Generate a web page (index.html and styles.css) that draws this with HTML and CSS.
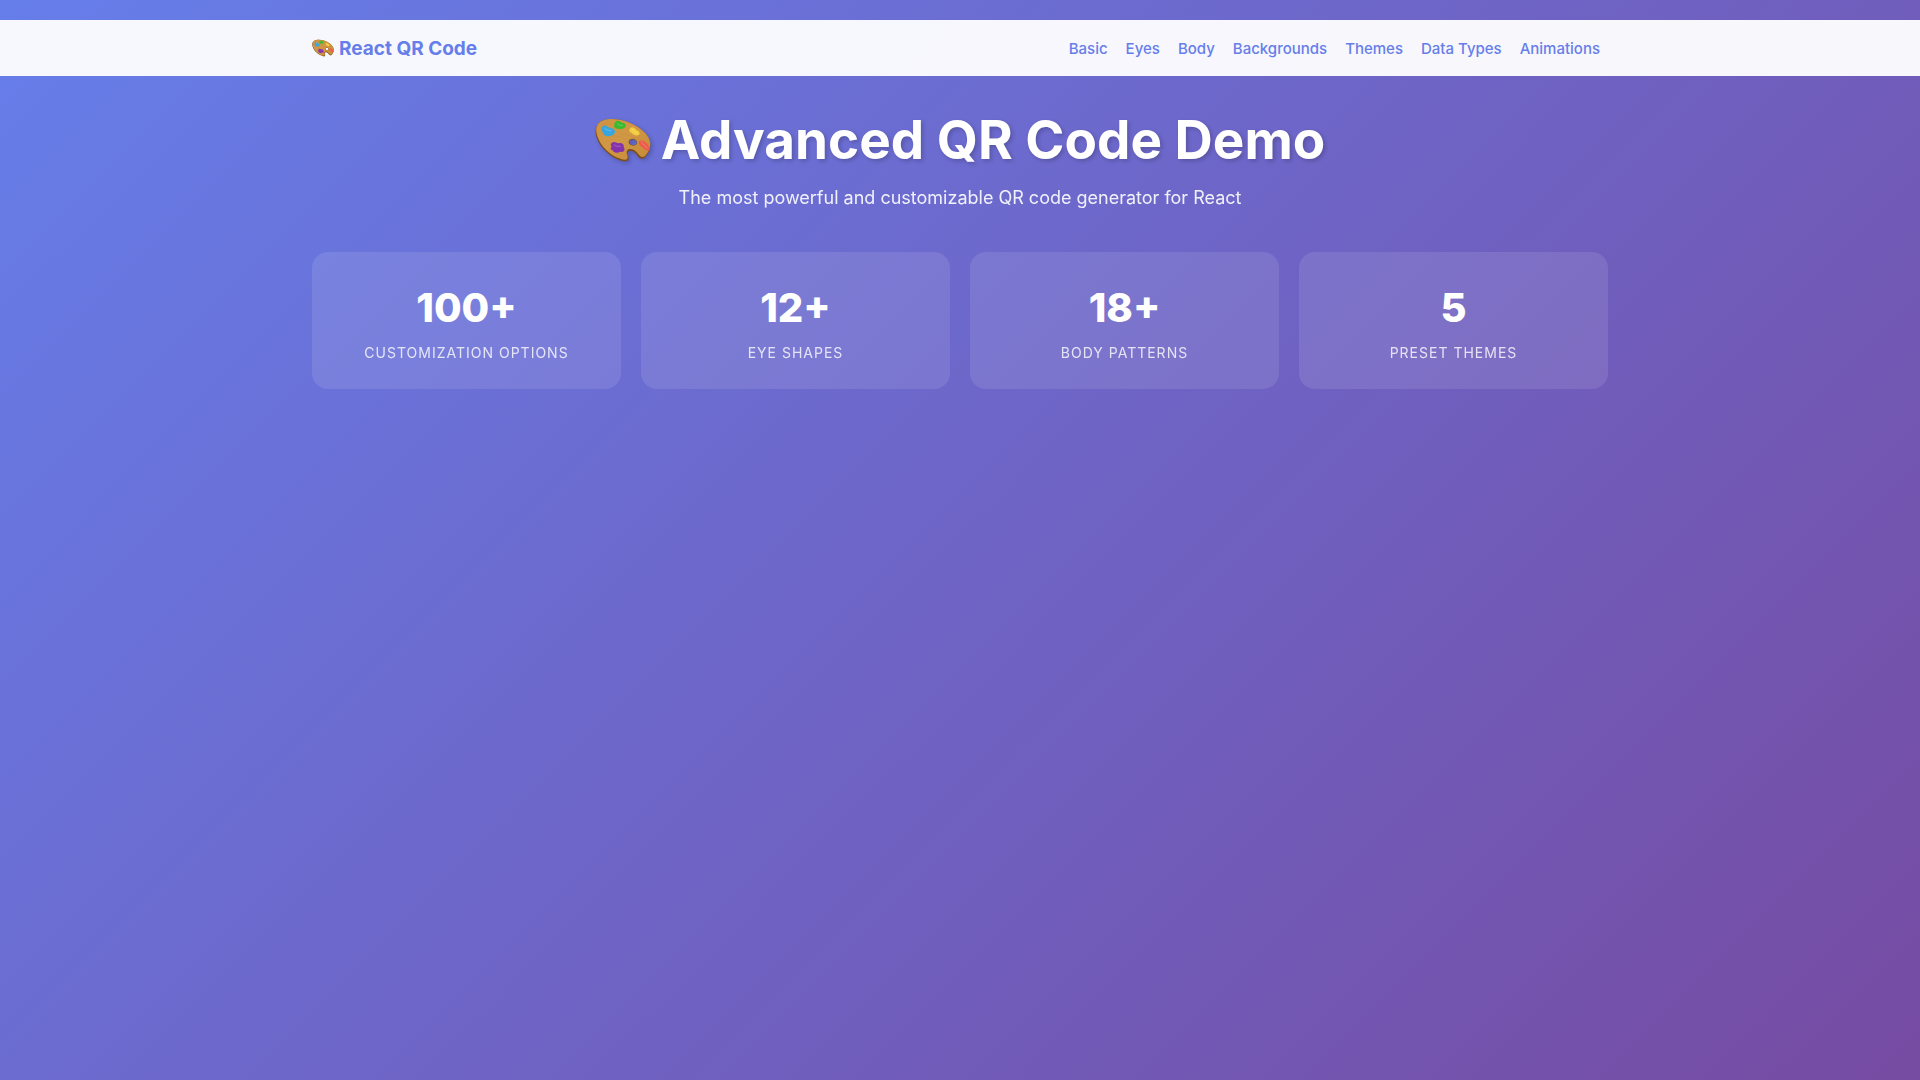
FILE: index.html
```html
<!DOCTYPE html>
<html lang="en">
<head>
<meta charset="utf-8">
<meta name="viewport" content="width=device-width, initial-scale=1">
<title>React QR Code</title>
<link rel="stylesheet" href="styles.css">
</head>
<body>
<svg class="sprite" aria-hidden="true">
  <defs>
    <linearGradient id="wood" x1="0" y1="0" x2="1" y2="1">
      <stop offset="0" stop-color="#cf9443"/>
      <stop offset=".5" stop-color="#d09745"/>
      <stop offset="1" stop-color="#c58a38"/>
    </linearGradient>
  </defs>
  <symbol id="palette" viewBox="46 56 168 132">
    <path fill="#7d4d17" fill-rule="evenodd" d="M48 100C46 76 62 61 88 59C122 57 158 69 184 90C203 105 213 122 212 139C211 154 204 165 196 174C190 181 181 179 176 172C169 163 163 154 153 154C144 154 142 160 145 168C149 178 146 187 136 186C102 182 52 144 48 100ZM149 129C150 136 158 140 165 137C173 134 173 126 167 122C161 118 148 120 149 129Z"/>
    <path fill="url(#wood)" fill-rule="evenodd" d="M50 97C47 75 63 61 88 59C122 57 158 69 184 90C203 105 213 122 212 136C211 149 205 159 197 169C191 175 183 174 178 167C171 157 163 149 153 149C143 149 139 155 142 164C146 174 144 182 136 181C101 178 56 140 50 97ZM147 129C148 137 158 141 166 138C175 135 174 126 168 121C161 116 146 118 147 129Z"/>
    <path fill="none" stroke="#a86e28" stroke-width="1" opacity=".3" d="M66 73C104 72 144 83 190 116M57 101C86 106 112 109 140 119M84 150C99 158 119 164 138 168M123 105C145 104 176 116 205 139"/>
    <path fill="#37a6df" d="M66 86C70 76 80 77 86 84C92 86 105 87 106 96C107 110 83 115 73 106C71 100 63 94 66 86Z"/>
    <path fill="#3abb30" d="M105 70C112 60 121 65 126 70C136 69 141 77 136 84C127 94 104 89 103 81Z"/>
    <path fill="#f3cb3d" d="M152 86C160 81 166 87 170 92C178 94 183 101 178 107C170 110 160 107 156 101C148 98 147 91 152 86Z"/>
    <path fill="#ed5b4b" d="M179 125C188 120 195 127 202 133C209 141 212 149 209 153C202 156 193 149 187 144C180 138 174 130 179 125Z"/>
    <path fill="#8533ad" d="M96 131C103 125 110 131 116 132C125 128 135 136 132 144C138 152 133 160 122 157C113 163 101 160 99 153C91 151 91 144 97 143C92 139 92 135 96 131Z"/>
    <path fill="none" stroke="#fff" stroke-width="2" stroke-linecap="round" opacity=".35" d="M75 87C83 93 88 94 94 94M114 73C119 79 122 79 128 78M158 90C162 97 166 98 171 101M185 128C192 137 197 140 203 146M103 137C111 143 118 140 122 141"/>
  </symbol>
</svg>
<nav class="navbar">
  <div class="container navbar-inner">
    <a class="brand" href="#top"><svg class="brand-icon" aria-hidden="true"><use href="#palette"/></svg>React QR Code</a>
    <div class="nav-links">
      <a href="#basic">Basic</a>
      <a href="#eyes">Eyes</a>
      <a href="#body">Body</a>
      <a href="#backgrounds">Backgrounds</a>
      <a href="#themes">Themes</a>
      <a href="#data-types">Data Types</a>
      <a href="#animations">Animations</a>
    </div>
  </div>
</nav>
<main class="container" id="top">
  <header class="hero">
    <h1><svg class="hero-icon" aria-hidden="true"><use href="#palette"/></svg>Advanced QR Code Demo</h1>
    <p>The most powerful and customizable QR code generator for React</p>
  </header>
  <section class="stats">
    <div class="stat"><div class="stat-number">100+</div><div class="stat-label">Customization Options</div></div>
    <div class="stat"><div class="stat-number">12+</div><div class="stat-label">Eye Shapes</div></div>
    <div class="stat"><div class="stat-number">18+</div><div class="stat-label">Body Patterns</div></div>
    <div class="stat"><div class="stat-number">5</div><div class="stat-label">Preset Themes</div></div>
  </section>
</main>
</body>
</html>
```
FILE: styles.css
```css
* {
  box-sizing: border-box;
}

body {
  margin: 0;
  padding: 20px 0;
  min-height: 100vh;
  font-family: Inter, "Liberation Sans", sans-serif;
  color: #fff;
  background: linear-gradient(135deg, #667eea 0%, #764ba2 100%);
}

.sprite {
  position: absolute;
  width: 0;
  height: 0;
}

.container {
  max-width: 1296px;
  margin: 0 auto;
}

.navbar {
  background: rgba(255, 255, 255, 0.95);
}

.navbar-inner {
  display: flex;
  align-items: center;
  justify-content: space-between;
  min-height: 56px;
}

.navbar a {
  color: #667eea;
  text-decoration: none;
}

.brand {
  display: flex;
  align-items: center;
  gap: 5px;
  font-size: 19px;
  font-weight: 700;
}

.brand-icon {
  width: 22px;
  height: 18px;
}

.nav-links {
  display: flex;
  flex-wrap: wrap;
  gap: 18px;
  padding-right: 8px;
  font-size: 15px;
  font-weight: 500;
}

.hero {
  padding: 30px 0 40px;
  text-align: center;
}

.hero h1 {
  display: flex;
  align-items: center;
  justify-content: center;
  gap: 10px;
  margin: 0 0 10px;
  font-size: 53px;
  line-height: 68px;
  font-weight: 700;
  text-shadow: 2px 2px 4px rgba(0, 0, 0, 0.2);
}

.hero-icon {
  width: 56px;
  height: 44px;
  filter: drop-shadow(2px 2px 2px rgba(0, 0, 0, 0.2));
}

.hero p {
  margin: 0;
  font-size: 18px;
  line-height: 28px;
  opacity: 0.9;
}

.stats {
  display: grid;
  grid-template-columns: repeat(auto-fit, minmax(200px, 1fr));
  gap: 20px;
}

.stat {
  padding: 24px;
  border-radius: 16px;
  background: rgba(255, 255, 255, 0.1);
  text-align: center;
}

.stat-number {
  font-size: 40px;
  line-height: 64px;
  font-weight: 800;
}

.stat-label {
  font-size: 14px;
  line-height: 25px;
  letter-spacing: 1px;
  text-transform: uppercase;
  opacity: 0.8;
}
```
